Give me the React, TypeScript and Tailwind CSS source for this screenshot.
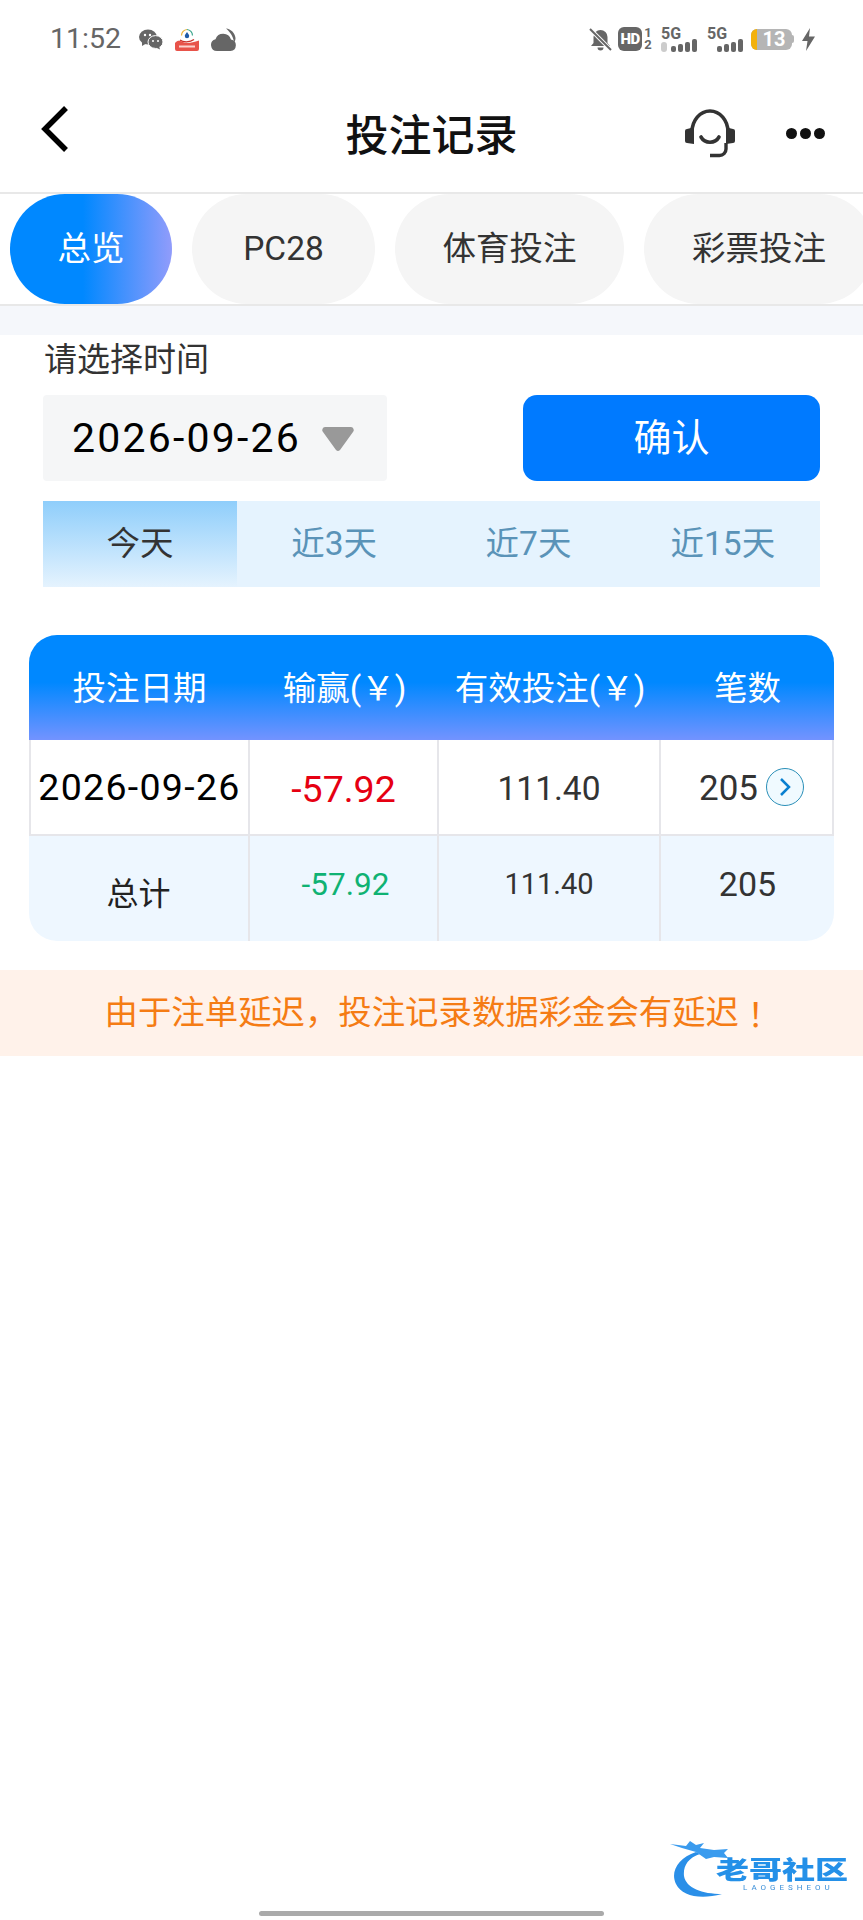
import React from "react";

const cjk = "font-['Roboto','Noto_Sans_CJK_SC',sans-serif]";

function Bars({ extra }: { extra?: boolean }) {
  return (
    <div className="relative h-[24px] w-[36px]">
      <span className="absolute left-0 top-0 text-[16px] font-bold leading-[14px] text-[#666]">5G</span>
      <div className="absolute bottom-[-1px] right-0 flex items-end gap-[2px]">
        <i className="block h-[6px] w-[5px] rounded-[2px] bg-[#666]" />
        <i className="block h-[8px] w-[5px] rounded-[2px] bg-[#666]" />
        <i className="block h-[10px] w-[5px] rounded-[2px] bg-[#666]" />
        <i className="block h-[13px] w-[5px] rounded-[2px] bg-[#666]" />
      </div>
      {extra && <i className="absolute bottom-[-1px] left-0 block h-[10px] w-[6px] rounded-[3px] bg-[#ccc]" />}
    </div>
  );
}

function StatusBar() {
  return (
    <div className="flex h-[80px] items-start justify-between pl-[50px] pr-[47px] pt-[27px]">
      <div className="flex h-[24px] items-center">
        <span className="w-[70px] text-[28.5px] leading-[24px] text-[#666]">11:52</span>
        <svg className="ml-[19px]" width="24" height="21" viewBox="0 0 24 21">
          <ellipse cx="9" cy="8" rx="9" ry="7.6" fill="#666" />
          <path d="M3 12 L3 17 L8 14Z" fill="#666" />
          <ellipse cx="16.5" cy="13" rx="7.5" ry="6.4" fill="#666" stroke="#fff" strokeWidth="1" />
          <path d="M20 17 L21 20.5 L16 18Z" fill="#666" />
          <circle cx="6" cy="6" r="1.2" fill="#fff" />
          <circle cx="11" cy="6" r="1.2" fill="#fff" />
          <circle cx="14" cy="12" r="1" fill="#fff" />
          <circle cx="19" cy="12" r="1" fill="#fff" />
        </svg>
        <svg className="ml-[12px]" width="24" height="23" viewBox="0 0 24 23">
          <path d="M6.5 7.5 A6 6 0 0 1 12 1.5" fill="none" stroke="#e9b23c" strokeWidth="1.2" />
          <path d="M12 1.5 A6 6 0 0 1 17.5 7.5" fill="none" stroke="#3aa58c" strokeWidth="1.2" />
          <path d="M12 4 C10.4 6.2 9.8 7 9.8 8 A2.2 2.2 0 0 0 14.2 8 C14.2 7 13.6 6.2 12 4Z" fill="#1d5aa8" />
          <path d="M5 12 C8 14.5 15 14.5 19 11.5" fill="none" stroke="#c8322c" strokeWidth="1.2" />
          <path d="M0 15 C3 11.5 6 13 9 14.5 C13 15.5 18 14.5 24 12.5 L24 21 A2 2 0 0 1 22 23 L2 23 A2 2 0 0 1 0 21Z" fill="#e8534a" />
          <rect x="4" y="17.5" width="16" height="2" fill="#fbd3cf" />
        </svg>
        <svg className="ml-[12px]" width="25" height="23" viewBox="0 0 25 23">
          <path d="M15 0.5 C20 1 24 5 24.5 10 C24.5 12 24 13 23 14 C22 8 19 4 15 0.5Z" fill="#666" />
          <path d="M6 23 A6 6 0 0 1 4.5 11.2 A8.2 8.2 0 0 1 20 11.5 A5.8 5.8 0 0 1 19.5 23Z" fill="#666" />
        </svg>
      </div>
      <div className="flex h-[24px] items-center">
        <svg width="23" height="23" viewBox="0 0 23 23">
          <path d="M11.5 2 A7 7 0 0 0 4.5 9 L4.5 15 L2 18 L21 18 L18.5 15 L18.5 9 A7 7 0 0 0 11.5 2Z" fill="#666" />
          <path d="M8.5 19.5 A3 3 0 0 0 14.5 19.5Z" fill="#666" />
          <path d="M1 1 L22 22" stroke="#fff" strokeWidth="4" />
          <path d="M1 1 L22 22" stroke="#666" strokeWidth="2" />
        </svg>
        <span className="ml-[6px] flex h-[24px] w-[24px] items-center justify-center rounded-[6px] bg-[#666] text-[15px] font-black leading-none tracking-[-0.5px] text-white">
          HD
        </span>
        <div className="ml-[1px] flex w-[10px] flex-col items-center text-[13px] font-bold leading-[12px] text-[#666]">
          <span>1</span>
          <span>2</span>
        </div>
        <div className="ml-[8px]">
          <Bars extra />
        </div>
        <div className="ml-[10px]">
          <Bars />
        </div>
        <div className="relative ml-[8px] flex h-[21px] w-[41px] items-center justify-center overflow-hidden rounded-[6px] bg-[#b5b5b5] pl-[5px] text-[20px] font-bold leading-none text-white">
          <i className="absolute inset-y-0 left-0 block w-[6px] bg-[#f3b10c]" />
          13
        </div>
        <i className="block h-[8px] w-[2px] rounded-r-[2px] bg-[#b5b5b5]" />
        <svg className="ml-[7px]" width="15" height="23" viewBox="0 0 15 23">
          <path d="M9 0 L1 13 L6.5 13 L5 23 L14 8.5 L8 8.5Z" fill="#666" />
        </svg>
      </div>
    </div>
  );
}

function NavBar() {
  return (
    <div className="grid h-[114px] grid-cols-[1fr_auto_1fr] items-center border-b-2 border-[#e8e8e8]">
      <div className="pb-[14px] pl-[41px]">
        <svg width="28" height="46" viewBox="0 0 28 46" className="block">
          <path d="M25 2 L4 23 L25 44" fill="none" stroke="#000" strokeWidth="5.5" />
        </svg>
      </div>
      <h1 className="text-center text-[43px] font-medium leading-[48px] text-[#111]">投注记录</h1>
      <div className="flex items-center justify-end pr-[38px]">
        <svg width="50" height="50" viewBox="0 0 50 50" className="mb-[7px] mr-[51px] block">
          <path d="M7 24 A18 21 0 0 1 43 24" fill="none" stroke="#333" strokeWidth="3.6" />
          <path d="M6 20 L2 21 A2 2 0 0 0 0 23 L0 33 A2 2 0 0 0 2 35 L9 36 L9 20Z" fill="#333" />
          <path d="M44 20 L48 21 A2 2 0 0 1 50 23 L50 33 A2 2 0 0 1 48 35 L41 36 L41 20Z" fill="#333" />
          <path d="M16 29 C20 36 30 36 34 29" fill="none" stroke="#333" strokeWidth="3.6" strokeLinecap="round" />
          <path d="M41 35 L41 41 A6.5 6.5 0 0 1 34.5 47.5 L25 47.5" fill="none" stroke="#333" strokeWidth="3.4" />
        </svg>
        <div className="mb-[6px] flex gap-[3px]">
          <i className="block h-[11px] w-[11px] rounded-full bg-[#111]" />
          <i className="block h-[11px] w-[11px] rounded-full bg-[#111]" />
          <i className="block h-[11px] w-[11px] rounded-full bg-[#111]" />
        </div>
      </div>
    </div>
  );
}

function Tabs() {
  const rest: [string, string][] = [
    ["PC28", "w-[183px]"],
    ["体育投注", "w-[229px]"],
    ["彩票投注", "w-[230px]"],
  ];
  return (
    <div className="flex h-[112px] items-center gap-[20px] overflow-hidden border-b-2 border-[#e8e8e8] pl-[10px]">
      <div className="flex h-[110px] w-[162px] shrink-0 items-center justify-center rounded-[55px] bg-[linear-gradient(90deg,#0088ff_45%,#919cfb)] text-[33.5px] text-white">
        总览
      </div>
      {rest.map(([t, w]) => (
        <div
          key={t}
          className={`flex h-[110px] shrink-0 items-center justify-center rounded-[55px] bg-[#f5f5f5] text-[33.5px] text-[#333] ${w}`}
        >
          {t}
        </div>
      ))}
    </div>
  );
}

function DateSection() {
  const others = ["近3天", "近7天", "近15天"];
  return (
    <div className="px-[43px]">
      <div className="pl-[1px] pt-[2px] text-[33px] leading-[46px] text-[#333]">请选择时间</div>
      <div className="mt-[12px] flex items-stretch justify-between">
        <div className="flex h-[86px] w-[344px] items-center rounded-[4px] bg-[#f5f6f7] pl-[29px] pt-[2px]">
          <span className="w-[230px] whitespace-nowrap text-[41px] tracking-[2.2px] text-black">2026-09-26</span>
          <svg className="ml-[19px]" width="34" height="26" viewBox="0 0 34 26">
            <path d="M4 1 L30 1 A3 3 0 0 1 32 6 L19 24 A3 3 0 0 1 15 24 L2 6 A3 3 0 0 1 4 1Z" fill="#999" />
          </svg>
        </div>
        <div className="flex h-[86px] w-[297px] items-center justify-center rounded-[14px] bg-[#007aff] text-[38px] text-white">
          确认
        </div>
      </div>
      <div className="mt-[20px] flex h-[86px] items-stretch bg-[#e5f3fe] text-[33.5px]">
        <div className="flex w-[194px] items-center justify-center bg-[linear-gradient(180deg,#8fcefb,#e5f3fe)] pt-[1px] text-[#333]">
          今天
        </div>
        {others.map((t) => (
          <div key={t} className="flex flex-1 items-center justify-center pt-[1px] text-[#5a93b8]">
            {t}
          </div>
        ))}
      </div>
    </div>
  );
}

function RecordTable() {
  const cols = "grid grid-cols-[221px_189px_222px_173px]";
  const cell = "flex items-center justify-center border-r-2 border-[#e6e6ea]";
  return (
    <div className="mx-[29px] mt-[48px] overflow-hidden rounded-[28px]">
      <div className={`${cols} h-[105px] bg-[linear-gradient(180deg,#0088ff_45%,#7393ff)] pt-[3px] text-[33.5px] text-white`}>
        <div className="flex items-center justify-center">投注日期</div>
        <div className="flex items-center justify-center">输赢(￥)</div>
        <div className="flex items-center justify-center">有效投注(￥)</div>
        <div className="flex items-center justify-center">笔数</div>
      </div>
      <div className={`${cols} h-[96px] border-b-2 border-[#e6e6ea] bg-white text-[37.5px]`}>
        <div className={`${cell} border-l-2 whitespace-nowrap pt-[1px] tracking-[1.3px] text-black`}>2026-09-26</div>
        <div className={`${cell} pt-[4px] text-[#e60012]`}>-57.92</div>
        <div className={`${cell} pt-[4px] text-[33.5px] text-[#333]`}>111.40</div>
        <div className={`${cell} pl-[10px] text-[35px] text-[#333]`}>
          <span className="pt-[4px]">205</span>
          <span className="ml-[8px] flex h-[38px] w-[38px] items-center justify-center rounded-full border border-[#2a8fb8] bg-[#f0faff]">
            <svg width="14" height="20" viewBox="0 0 14 20">
              <path d="M3 2 L11 10 L3 18" fill="none" stroke="#0a80d0" strokeWidth="2.5" />
            </svg>
          </span>
        </div>
      </div>
      <div className={`${cols} h-[105px] bg-[#eef7ff]`}>
        <div className={`${cell} pt-[10px] text-[32px] text-[#222]`}>总计</div>
        <div className={`${cell} pb-[8px] pl-[4px] text-[31.5px] text-[#0fb273]`}>-57.92</div>
        <div className={`${cell} pb-[8px] text-[29px] text-[#333]`}>111.40</div>
        <div className="flex items-center justify-center pb-[8px] text-[34px] text-[#333]">205</div>
      </div>
    </div>
  );
}

function Logo() {
  return (
    <div className="relative h-[60px] w-[180px] blur-[0.7px]">
      <svg className="absolute left-0 top-0" width="70" height="60" viewBox="0 0 70 60">
        <path d="M26 12 C8 18 0 32 6 44 C12 56 30 60 52 54 C32 54 16 48 14 36 C13 26 18 18 30 14Z" fill="#2a8fe8" />
        <path d="M0 4 L16 6 L20 1 L26 5 L34 3 L30 8 L44 10 L58 9 L54 13 L58 18 L44 17 L36 19 L26 12 L12 8Z" fill="#3a9bee" />
      </svg>
      <span className="absolute left-[46px] top-[13px] origin-center scale-y-[0.75] whitespace-nowrap text-[33px] font-black leading-[36px] text-[#2490e8]">
        老哥社区
      </span>
      <span className="absolute left-[73px] top-[43px] whitespace-nowrap text-[8px] leading-[10px] tracking-[4px] text-[#3b8fd8]">
        LAOGESHEOU
      </span>
    </div>
  );
}

export default function App() {
  return (
    <div className={`flex h-[1920px] w-[863px] flex-col overflow-hidden bg-white ${cjk}`}>
      <StatusBar />
      <NavBar />
      <Tabs />
      <div className="h-[29px] bg-[#f5f7fb]" />
      <DateSection />
      <RecordTable />
      <div className="mt-[29px] flex h-[86px] items-center justify-center bg-[#fff2ea] pl-[14px] text-[33.4px] text-[#f57c14]">
        <span>由于注单延迟，投注记录数据彩金会有延迟</span>
        <span className="font-['Noto_Sans_CJK_TC',sans-serif]">！</span>
      </div>
      <div className="flex flex-1 items-end justify-end pb-[11px] pr-[13px]">
        <Logo />
      </div>
      <div className="flex h-[9px] justify-center">
        <i className="block h-[5px] w-[345px] rounded-full bg-[#aaa]" />
      </div>
    </div>
  );
}
